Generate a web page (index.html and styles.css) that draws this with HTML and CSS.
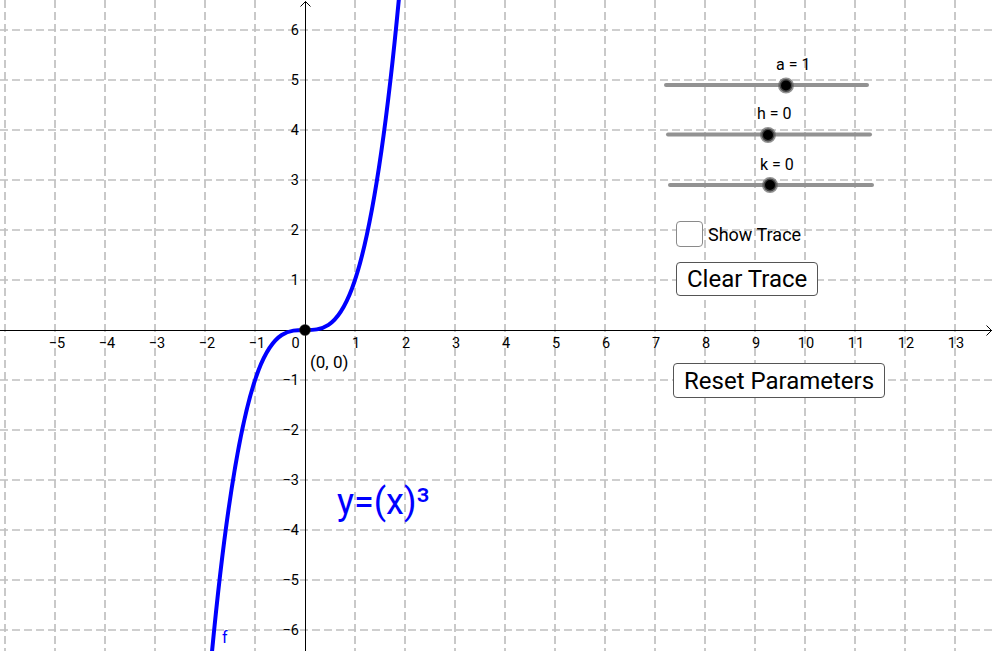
FILE: index.html
```html
<!DOCTYPE html>
<html lang="en">
<head>
<meta charset="utf-8">
<title>y=(x)³ – Graph</title>
<link rel="stylesheet" href="styles.css">
</head>
<body>
<div class="applet">
  <svg class="board" width="995" height="651" viewBox="0 0 995 651" xmlns="http://www.w3.org/2000/svg">
    <path class="grid" d="M5 0V651M55 0V651M105 0V651M155 0V651M205 0V651M255 0V651M355 0V651M405 0V651M455 0V651M505 0V651M555 0V651M605 0V651M655 0V651M705 0V651M755 0V651M805 0V651M855 0V651M905 0V651M955 0V651M0 30H995M0 80H995M0 130H995M0 180H995M0 230H995M0 280H995M0 380H995M0 430H995M0 480H995M0 530H995M0 580H995M0 630H995"/>
    <path class="axis" d="M0 330.5H992M305.5 651V1.5"/>
    <path class="axis" d="M986.5 325.5L991.5 330.5L986.5 335.5M300.5 6.5L305.5 1.5L310.5 6.5"/>
    <g class="ticks-x">
      <text x="57" y="348">−5</text>
      <text x="107" y="348">−4</text>
      <text x="157" y="348">−3</text>
      <text x="207" y="348">−2</text>
      <text x="257" y="348">−1</text>
      <text x="295.5" y="348">0</text>
      <text x="356" y="348">1</text>
      <text x="406" y="348">2</text>
      <text x="456" y="348">3</text>
      <text x="506" y="348">4</text>
      <text x="556" y="348">5</text>
      <text x="606" y="348">6</text>
      <text x="656" y="348">7</text>
      <text x="706" y="348">8</text>
      <text x="756" y="348">9</text>
      <text x="806" y="348">10</text>
      <text x="856" y="348">11</text>
      <text x="906" y="348">12</text>
      <text x="956" y="348">13</text>
    </g>
    <g class="ticks-y">
      <text x="299" y="35">6</text>
      <text x="299" y="85">5</text>
      <text x="299" y="135">4</text>
      <text x="299" y="185">3</text>
      <text x="299" y="235">2</text>
      <text x="299" y="285">1</text>
      <text x="299" y="385">−1</text>
      <text x="299" y="435">−2</text>
      <text x="299" y="485">−3</text>
      <text x="299" y="535">−4</text>
      <text x="299" y="585">−5</text>
      <text x="299" y="635">−6</text>
    </g>
    <path class="curve" d="M212 651.74C274.33 4.8 336.67 658.7 399 -2.23"/>
    <circle class="point" cx="305" cy="330" r="5.5"/>
    <text class="point-label" x="310" y="368">(0, 0)</text>
    <text class="fn-label" x="222" y="643">f</text>
    <text class="formula" x="337" y="514">y=(x)³</text>

    <g class="slider">
      <text class="slider-label" x="776" y="69.5">a = 1</text>
      <line class="slider-track" x1="666" y1="85" x2="867" y2="85"/>
      <circle class="slider-knob" cx="786" cy="85.5" r="6.5"/>
    </g>
    <g class="slider">
      <text class="slider-label" x="757" y="119">h = 0</text>
      <line class="slider-track" x1="668" y1="134.5" x2="870" y2="134.5"/>
      <circle class="slider-knob" cx="768" cy="135" r="6.5"/>
    </g>
    <g class="slider">
      <text class="slider-label" x="760" y="170">k = 0</text>
      <line class="slider-track" x1="670" y1="185" x2="872" y2="185"/>
      <circle class="slider-knob" cx="770" cy="185" r="6.5"/>
    </g>
  </svg>

  <label class="trace-toggle">
    <span class="trace-box"></span>
    <span class="trace-text">Show Trace</span>
  </label>
  <button class="btn btn-clear" type="button">Clear Trace</button>
  <button class="btn btn-reset" type="button">Reset Parameters</button>
</div>
</body>
</html>
```

FILE: styles.css
```css
* {
  box-sizing: border-box;
}

html, body {
  margin: 0;
  padding: 0;
  background: #ffffff;
  overflow: hidden;
}

.applet {
  position: relative;
  width: 995px;
  height: 651px;
  font-family: Roboto, "Liberation Sans", sans-serif;
  color: #000;
}

.board {
  display: block;
}

.grid {
  fill: none;
  stroke: #c0c0c0;
  stroke-width: 1.7;
  stroke-dasharray: 8 4;
}

.axis {
  fill: none;
  stroke: #000;
  stroke-width: 1;
}

.ticks-x text,
.ticks-y text {
  font-family: Roboto, "Liberation Sans", sans-serif;
  font-size: 14.5px;
  fill: #000;
}

.ticks-x text {
  text-anchor: middle;
}

.ticks-y text {
  text-anchor: end;
}

.curve {
  fill: none;
  stroke: #0000ff;
  stroke-width: 4;
}

.point {
  fill: #000;
  stroke: #333;
  stroke-width: 0.5;
}

.point-label {
  font-family: Roboto, "Liberation Sans", sans-serif;
  font-size: 17px;
  fill: #000;
}

.fn-label {
  font-family: Roboto, "Liberation Sans", sans-serif;
  font-size: 16px;
  fill: #0000ff;
}

.formula {
  font-family: Roboto, "Liberation Sans", sans-serif;
  font-size: 36px;
  fill: #0000ff;
}

.slider-label {
  font-family: Roboto, "Liberation Sans", sans-serif;
  font-size: 16px;
  fill: #000;
}

.slider-track {
  stroke: #929292;
  stroke-width: 4;
  stroke-linecap: round;
}

.slider-knob {
  fill: #000;
  stroke: rgba(100, 100, 100, 0.7);
  stroke-width: 3;
}

.trace-toggle {
  position: absolute;
  left: 676px;
  top: 221px;
  display: flex;
  align-items: center;
  gap: 5px;
  height: 26px;
}

.trace-box {
  width: 27px;
  height: 26px;
  border: 1.5px solid #8a8a8a;
  border-radius: 4px;
  background: #fff;
}

.trace-text {
  font-size: 18px;
  line-height: 1;
  padding-top: 2px;
}

.btn {
  position: absolute;
  height: 35px;
  padding: 0 10px;
  font-family: Roboto, "Liberation Sans", sans-serif;
  font-size: 24px;
  line-height: 1;
  color: #000;
  background: #fff;
  border: 1.5px solid #555;
  border-radius: 4px;
}

.btn-clear {
  left: 676px;
  top: 262px;
  height: 34px;
}

.btn-reset {
  left: 673px;
  top: 363px;
}
```
